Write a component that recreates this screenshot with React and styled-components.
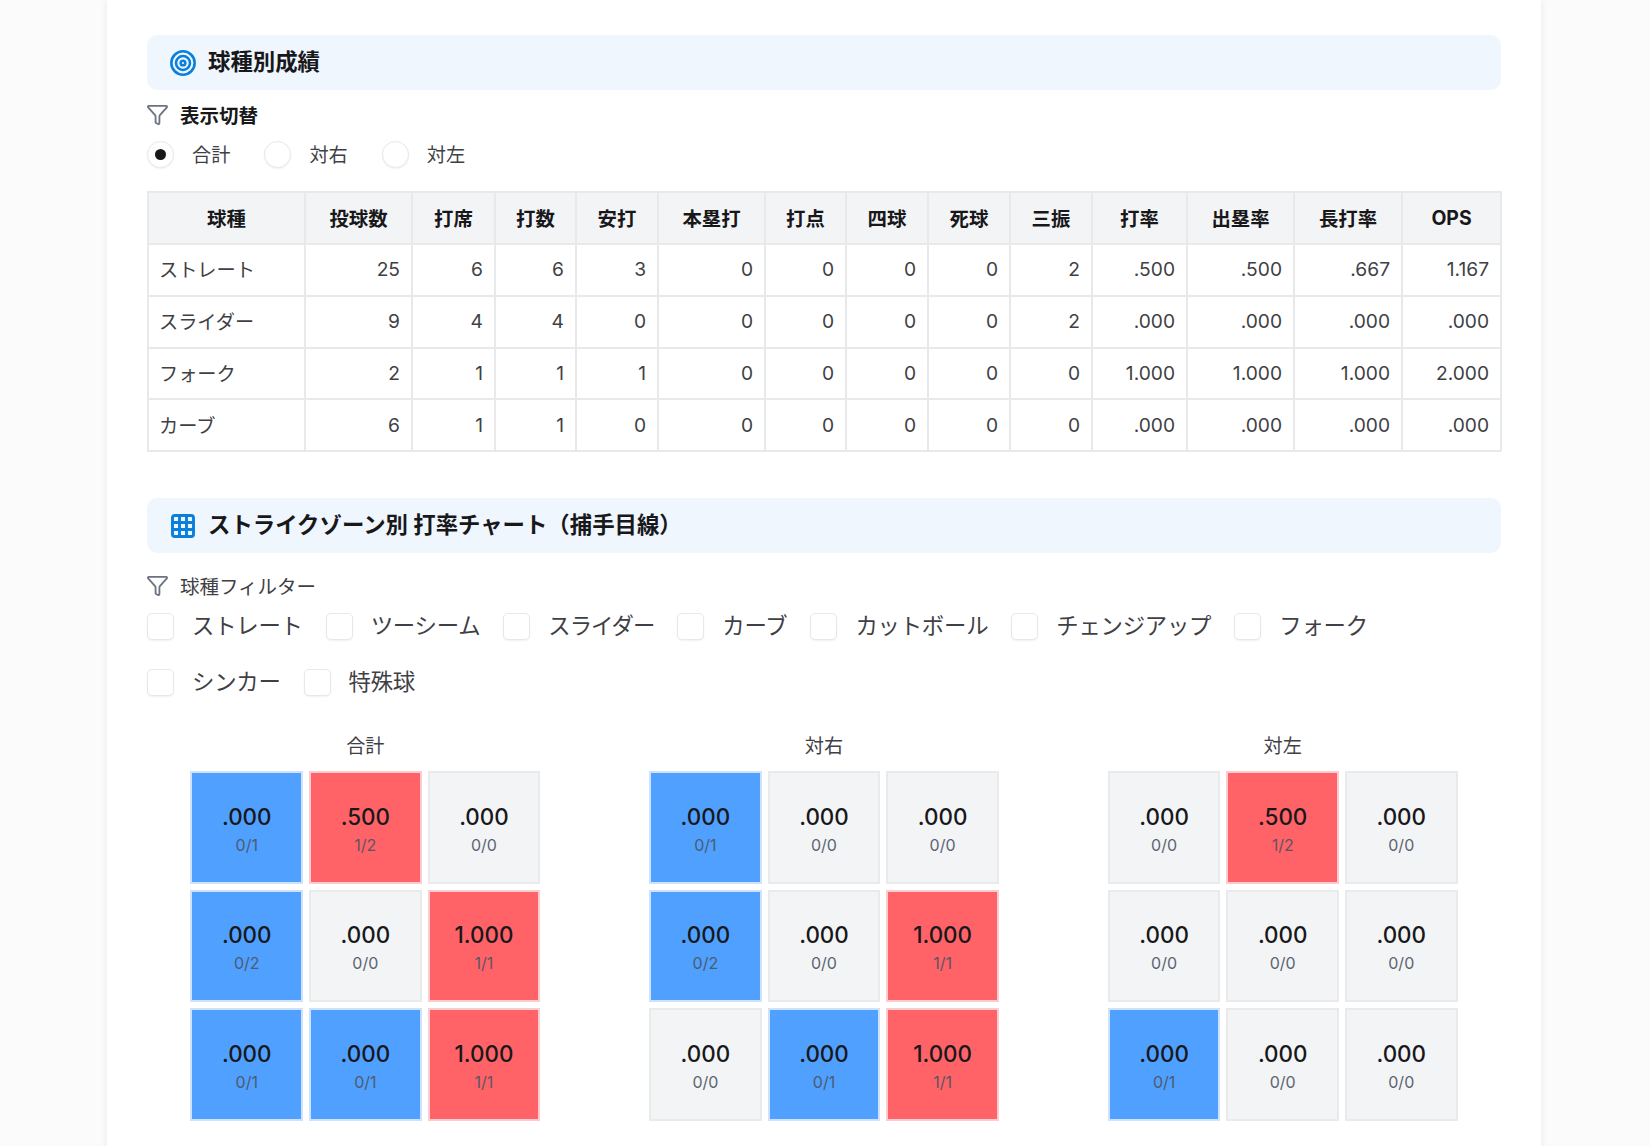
import React from 'react';
import styled, { createGlobalStyle } from 'styled-components';
import { Filter, Grid3x3, Target } from 'lucide-react';

const GlobalStyle = createGlobalStyle`
  html, body {
    margin: 0;
    height: 1146px;
    overflow: hidden;
    background: #fbfbfc;
    font-family: Inter, "Noto Sans CJK JP", sans-serif;
    color: #18181b;
  }
`;

const columns = [
  ['球種', 157], ['投球数', 107], ['打席', 83], ['打数', 81], ['安打', 82], ['本塁打', 107], ['打点', 81],
  ['四球', 82], ['死球', 82], ['三振', 82], ['打率', 95], ['出塁率', 107], ['長打率', 108], ['OPS', 99],
];

const rows = [
  ['ストレート', 25, 6, 6, 3, 0, 0, 0, 0, 2, '.500', '.500', '.667', '1.167'],
  ['スライダー', 9, 4, 4, 0, 0, 0, 0, 0, 2, '.000', '.000', '.000', '.000'],
  ['フォーク', 2, 1, 1, 1, 0, 0, 0, 0, 0, '1.000', '1.000', '1.000', '2.000'],
  ['カーブ', 6, 1, 1, 0, 0, 0, 0, 0, 0, '.000', '.000', '.000', '.000'],
];

const pitchTypes = [
  { name: 'ストレート' },
  { name: 'ツーシーム' },
  { name: 'スライダー', tight: true },
  { name: 'カーブ' },
  { name: 'カットボール' },
  { name: 'チェンジアップ' },
  { name: 'フォーク' },
  { name: 'シンカー' },
  { name: '特殊球' },
];

const charts = [
  {
    title: '合計',
    cells: [
      ['cold', '.000', '0/1'], ['hot', '.500', '1/2'], ['none', '.000', '0/0'],
      ['cold', '.000', '0/2'], ['none', '.000', '0/0'], ['hot', '1.000', '1/1'],
      ['cold', '.000', '0/1'], ['cold', '.000', '0/1'], ['hot', '1.000', '1/1'],
    ],
  },
  {
    title: '対右',
    cells: [
      ['cold', '.000', '0/1'], ['none', '.000', '0/0'], ['none', '.000', '0/0'],
      ['cold', '.000', '0/2'], ['none', '.000', '0/0'], ['hot', '1.000', '1/1'],
      ['none', '.000', '0/0'], ['cold', '.000', '0/1'], ['hot', '1.000', '1/1'],
    ],
  },
  {
    title: '対左',
    cells: [
      ['none', '.000', '0/0'], ['hot', '.500', '1/2'], ['none', '.000', '0/0'],
      ['none', '.000', '0/0'], ['none', '.000', '0/0'], ['none', '.000', '0/0'],
      ['cold', '.000', '0/1'], ['none', '.000', '0/0'], ['none', '.000', '0/0'],
    ],
  },
];

const tones = {
  cold: { bg: '#50a0ff', border: '#cfe2fb' },
  hot: { bg: '#ff6368', border: '#fbcdd0' },
  none: { bg: '#f3f4f6', border: '#e9eaec' },
};

const App = () => (
  <Page>
    <GlobalStyle />
    <Card>
      <SectionHeader>
        <Target size={28} color="#0a7fdc" strokeWidth={2.2} />
        <SectionTitle>球種別成績</SectionTitle>
      </SectionHeader>
      <FilterLabel>
        <FilterIcon size={23} color="#6b7280" strokeWidth={1.9} />
        表示切替
      </FilterLabel>
      <RadioRow>
        <Option><Radio $checked /><RadioText>合計</RadioText></Option>
        <Option><Radio /><RadioText>対右</RadioText></Option>
        <Option><Radio /><RadioText>対左</RadioText></Option>
      </RadioRow>
      <StatsTable>
        <colgroup>
          {columns.map(([name, width]) => <col key={name} width={width} />)}
        </colgroup>
        <thead>
          <tr>{columns.map(([name]) => <Th key={name}>{name}</Th>)}</tr>
        </thead>
        <tbody>
          {rows.map((row) => (
            <tr key={row[0]}>
              {row.map((value, i) => <Td key={i} $first={i === 0}>{value}</Td>)}
            </tr>
          ))}
        </tbody>
      </StatsTable>

      <ZoneHeader>
        <Grid3x3 size={28} color="#0a7fdc" strokeWidth={2.5} />
        <SectionTitle>ストライクゾーン別 打率チャート（捕手目線）</SectionTitle>
      </ZoneHeader>
      <ZoneFilterLabel>
        <FilterIcon size={23} color="#6b7280" strokeWidth={1.9} />
        球種フィルター
      </ZoneFilterLabel>
      <CheckRow>
        {pitchTypes.map(({ name, tight }) => (
          <Option key={name}><Check /><CheckText $tight={tight}>{name}</CheckText></Option>
        ))}
      </CheckRow>
      <Charts>
        {charts.map((chart) => (
          <Chart key={chart.title}>
            <ChartTitle>{chart.title}</ChartTitle>
            <Zone>
              {chart.cells.map(([tone, avg, count], i) => (
                <ZoneCell key={i} $tone={tone}>
                  <Avg>{avg}</Avg>
                  <Count>{count}</Count>
                </ZoneCell>
              ))}
            </Zone>
          </Chart>
        ))}
      </Charts>
    </Card>
  </Page>
);

const Page = styled.div`
  height: 1146px;
  overflow: hidden;
  padding: 0 109px 0 107px;
  box-sizing: border-box;
`;

const Card = styled.div`
  background: #fff;
  height: 1200px;
  padding: 35px 40px 0 40px;
  box-sizing: border-box;
  box-shadow: 0 0 8px rgba(0, 0, 0, 0.07);
`;

const SectionHeader = styled.div`
  display: flex;
  align-items: center;
  gap: 11px;
  height: 55px;
  padding-left: 22px;
  background: #eff6fe;
  border-radius: 10px;
`;

const ZoneHeader = styled(SectionHeader)`
  margin-top: 46px;
`;

const SectionTitle = styled.h2`
  margin: 0 0 1px;
  font-size: 22.4px;
  line-height: 30px;
  font-weight: 700;
  color: #18181b;
`;

const FilterIcon = styled(Filter)`
  margin-left: -1px;
`;

const FilterLabel = styled.div`
  display: flex;
  align-items: center;
  gap: 11px;
  height: 28px;
  margin-top: 10px;
  font-size: 19.5px;
  font-weight: 700;
`;

const ZoneFilterLabel = styled(FilterLabel)`
  margin-top: 18px;
  font-weight: 400;
  color: #3f3f46;
`;

const RadioRow = styled.div`
  display: flex;
  gap: 34px;
  height: 30px;
  margin-top: 11px;
  align-items: center;
`;

const Option = styled.label`
  display: flex;
  align-items: center;
  gap: 18px;
`;

const Radio = styled.span`
  display: flex;
  align-items: center;
  justify-content: center;
  width: 27px;
  height: 27px;
  box-sizing: border-box;
  border-radius: 50%;
  background: #fff;
  border: 1px solid #e8e8ea;
  box-shadow: 0 1px 2px rgba(0, 0, 0, 0.06);

  &::after {
    content: '';
    display: ${(props) => (props.$checked ? 'block' : 'none')};
    width: 11px;
    height: 11px;
    border-radius: 50%;
    background: #18181b;
  }
`;

const RadioText = styled.span`
  font-size: 19.2px;
  color: #3f3f46;
`;

const StatsTable = styled.table`
  width: 1353px;
  margin-top: 22px;
  table-layout: fixed;
  border-collapse: collapse;
  border: 2px solid #e8e9eb;
`;

const Th = styled.th`
  height: 52px;
  padding: 0 12px 1px;
  box-sizing: border-box;
  background: #f3f4f6;
  border: 2px solid #e8e9eb;
  font-size: 19.4px;
  font-weight: 700;
  text-align: center;
  color: #18181b;
`;

const Td = styled.td`
  height: 51.75px;
  padding: 0 11px 1px 10px;
  box-sizing: border-box;
  border: 2px solid #e8e9eb;
  font-size: 19.2px;
  color: #3f3f46;
  text-align: ${(props) => (props.$first ? 'left' : 'right')};
`;

const CheckRow = styled.div`
  display: flex;
  flex-wrap: wrap;
  gap: 22px 23px;
  margin-top: 10px;
`;

const Check = styled.span`
  width: 27px;
  height: 27px;
  box-sizing: border-box;
  border-radius: 5px;
  background: #fff;
  border: 1px solid #e8e8ea;
  box-shadow: 0 1px 2px rgba(0, 0, 0, 0.06);
`;

const CheckText = styled.span`
  font-size: 22.4px;
  line-height: 34px;
  color: #3f3f46;
  letter-spacing: ${(props) => (props.$tight ? '-1px' : '-0.25px')};
`;

const Charts = styled.div`
  display: grid;
  grid-template-columns: repeat(3, 1fr);
  gap: 22px;
  margin-top: 32px;
`;

const Chart = styled.div`
  display: flex;
  flex-direction: column;
  align-items: center;
`;

const ChartTitle = styled.div`
  padding-top: 1px;
  margin-bottom: 11px;
  font-size: 19.2px;
  line-height: 28px;
  color: #3f3f46;
`;

const Zone = styled.div`
  display: grid;
  grid-template-columns: repeat(3, 112.6px);
  grid-auto-rows: 112.6px;
  gap: 6px;
`;

const ZoneCell = styled.div`
  display: flex;
  flex-direction: column;
  align-items: center;
  justify-content: center;
  padding-top: 3px;
  box-sizing: border-box;
  background: ${(props) => tones[props.$tone].bg};
  border: 2px solid ${(props) => tones[props.$tone].border};
`;

const Avg = styled.div`
  font-size: 22.4px;
  line-height: 32px;
  font-weight: 500;
  color: #18181b;
`;

const Count = styled.div`
  font-size: 16px;
  line-height: 24px;
  color: #4b5563;
  opacity: 0.9;
`;

export default App;
